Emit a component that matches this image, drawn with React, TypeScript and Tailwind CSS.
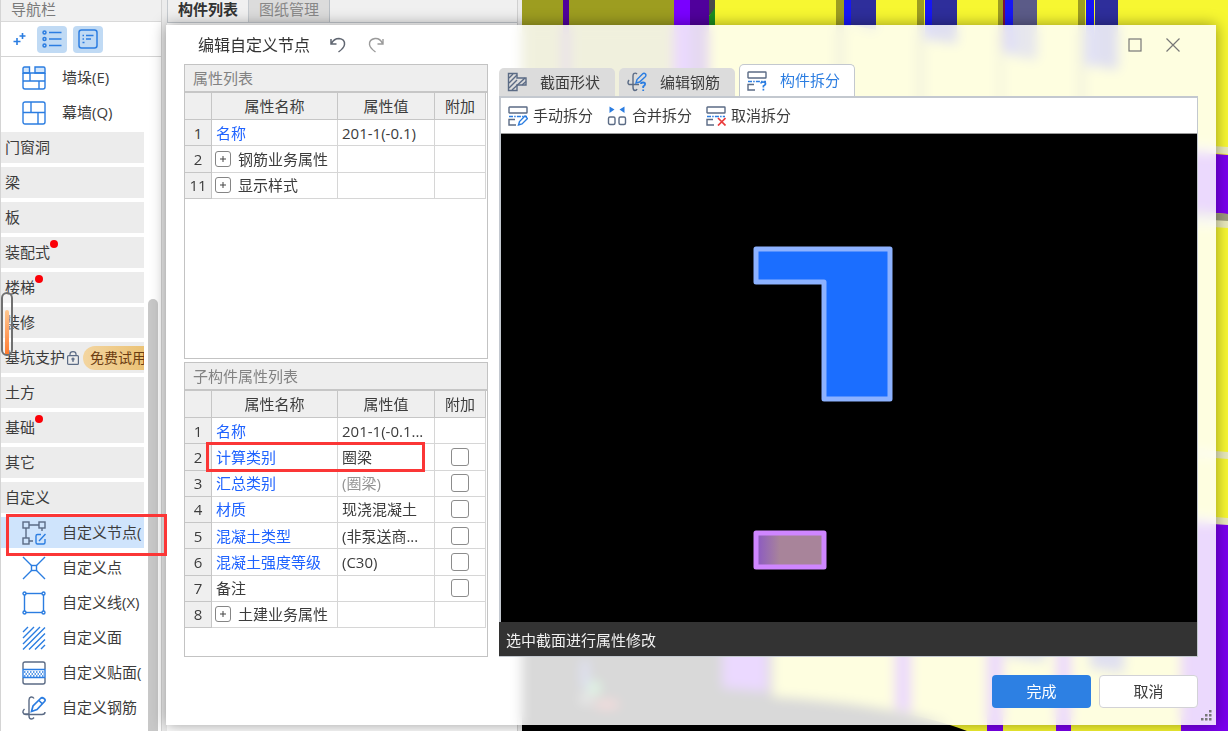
import React, { useState } from 'react';

type IconProps = { children: React.ReactNode; className?: string };

const BLUE = '#2b7de1';
const SLATE = '#5b6b85';

// 24 格图标
const Icon24: React.FC<IconProps> = ({ children, className = 'h-6 w-6 shrink-0' }) => (
  <svg viewBox="0 0 24 24" fill="none" stroke={BLUE} strokeWidth={1.4} className={className} aria-hidden="true">
    {children}
  </svg>
);

// 20 格图标
const Icon20: React.FC<IconProps> = ({ children }) => (
  <svg viewBox="0 0 20 20" fill="none" stroke={SLATE} strokeWidth={1.4} className="h-5 w-5 shrink-0" aria-hidden="true">
    {children}
  </svg>
);

const WallStackIcon = () => (
  <Icon24>
    <path d="M1 2.5Q1 1 2.5 1H7.5V7H1ZM13 7V1H21.5Q23 1 23 2.5V7Z" fill="#d3e6fb" />
    <path d="M1 7V21Q1 23 3 23H21Q23 23 23 21V7M1 7H23M1 15H17M12 7V15M7 15V23M17 15V23M17 15H23" stroke="none" />
    <path d="M1 7V21Q1 23 3 23H21Q23 23 23 21V7M1 7H23M1 15H23M8 7V15M17 15V23" />
  </Icon24>
);

const CurtainWallIcon = () => (
  <Icon24>
    <rect x="1" y="1" width="22" height="22" rx="2" />
    <path d="M1 11.5H23M9 1V11.5M16 11.5V23" />
  </Icon24>
);

const CustomNodeIcon = () => (
  <Icon24>
    <g stroke={SLATE}>
      <rect x="1" y="1" width="6" height="6" />
      <rect x="17" y="1" width="6" height="6" />
      <rect x="1" y="17" width="6" height="6" />
      <path d="M7 4H17M4 7V17M20 7V10M7 20H11" />
    </g>
    <path d="M19 13.5H15.5Q14 13.5 14 15V21.5Q14 23 15.5 23H21.5Q23 23 23 21.5V18M17 20L23.5 13" />
  </Icon24>
);

const CustomPointIcon = () => (
  <Icon24>
    <path d="M1 1L9.5 9.5M23 1L14.5 9.5M1 23L9.5 14.5M23 23L14.5 14.5" />
    <rect x="9.5" y="9.5" width="5" height="5" />
  </Icon24>
);

const CustomLineIcon = () => (
  <Icon24>
    <rect x="2.5" y="2.5" width="19" height="19" />
    <g fill="#fff">
      <circle cx="2.5" cy="2.5" r="1.5" />
      <circle cx="21.5" cy="2.5" r="1.5" />
      <circle cx="2.5" cy="21.5" r="1.5" />
      <circle cx="21.5" cy="21.5" r="1.5" />
    </g>
  </Icon24>
);

const CustomFaceIcon = () => (
  <Icon24>
    <path d="M1 6L6 1M1 12L12 1M1 18L18 1M1 23.5L23 1.5M7 23.5L23 7.5M13 23.5L23 13.5M19 23L23 19" />
  </Icon24>
);

const CustomVeneerIcon = () => (
  <Icon24>
    <path d="M1 8V3Q1 1 3 1H21Q23 1 23 3V8M1 17V21Q1 23 3 23H21Q23 23 23 21V17" stroke={SLATE} />
    <path d="M1 8.5H23M1 16.5H23M1 8V17M23 8V17" />
    <path d="M2 11H22" strokeDasharray="1.5 1.5" />
    <path d="M3.5 13H22" strokeDasharray="1.5 1.5" />
    <path d="M2 15H22" strokeDasharray="1.5 1.5" />
  </Icon24>
);

const CustomRebarIcon = () => (
  <Icon24>
    <path
      d="M12 2.5Q11 .8 9 1Q7 1.5 7 4V20Q7 23 9.5 23Q11 23 12 21.5M2.5 13Q.5 15 1 16.5Q1.5 18.5 4 18.5H20Q23 18.5 23 16M3 18H7"
      stroke={SLATE}
    />
    <path d="M9.500 15.500L11 10L18.500 2.500Q20 1 22 2.500Q24 4 22.500 5.500L15 13.500ZM17 4.500L20.500 8" strokeWidth={1.700} />
  </Icon24>
);

const SectionShapeIcon = () => (
  <Icon20>
    <path d="M1.5 1.5H10V6H19V13H10V18.5H1.5Z" />
    <path d="M2 6L6 2M2 11L10 3M2 16L10 8M5 18L18 6M11 12.5L17 7M15 13L19 9.5" />
  </Icon20>
);

const EditRebarIcon = () => (
  <Icon20>
    <path d="M10 2Q8.500 .5 7 1.500Q6 2 6 4V15Q6 18.500 8 18.500Q9.500 18.500 10 17M2 8Q0 11 2 12.500H12" />
    <path d="M9 11L10 7.500L15.500 2Q17 .500 18.500 2Q19.500 3.500 18 5L12.500 10Z" stroke={BLUE} />
    <path d="M14 12Q14 10.500 16 10.500Q18.500 10.500 18 12.500Q17.800 13.500 16.200 14.500V16M16.200 17.500V19" stroke={BLUE} strokeWidth={1.8} />
  </Icon20>
);

// 拆分类图标共用的底图
const SplitBase = () => (
  <>
    <rect x="1" y="1" width="18" height="6" rx="0.5" />
    <path d="M7 13.500H1V19H8" />
    <path d="M1 10.500H19" stroke={BLUE} strokeDasharray="4 1.200 1.500 1.200" />
  </>
);

const SplitQuestionIcon = () => (
  <Icon20>
    <SplitBase />
    <path d="M14 12.500Q14 11 16.200 11Q18.700 11 18.500 13Q18.300 14 16.400 15V16.500M16.400 17.800V19.400" stroke={BLUE} strokeWidth={1.7} />
  </Icon20>
);

const SplitManualIcon = () => (
  <Icon20>
    <SplitBase />
    <path d="M10.500 19L11.500 15.500L17 10L19.500 12.500L14 18Z" fill="#fff" stroke={BLUE} />
  </Icon20>
);

const SplitCancelIcon = () => (
  <Icon20>
    <SplitBase />
    <path d="M12 12L19.500 19.500M19.500 12L12 19.500" stroke="#ea3b3b" strokeWidth={1.7} />
  </Icon20>
);

const MergeIcon = () => (
  <Icon20>
    <rect x="1.500" y="11" width="6.500" height="7.500" rx="1.500" />
    <rect x="12" y="11" width="6.500" height="7.500" rx="1.500" />
    <path d="M2.500 0.500L7.500 3.500L2.500 7ZM17.500 0.500L12.500 3.500L17.500 7Z" fill={BLUE} stroke="none" />
  </Icon20>
);

const LockIcon = () => (
  <svg viewBox="0 0 12 14" fill="none" stroke={SLATE} strokeWidth={1.2} className="h-3.5 w-3 shrink-0" aria-hidden="true">
    <rect x="0.600" y="4.600" width="10.800" height="8.800" rx="1" />
    <path d="M3 4.500V3Q3 .6 6 .6Q9 .6 9 3V4.500M6 8.500V11" />
    <circle cx="6" cy="8" r="1" />
  </svg>
);

type NavItem = {
  label: string;
  icon?: React.FC;
  dot?: boolean;
  trial?: boolean;
  active?: boolean;
};

const navItems: NavItem[] = [
  { label: '墙垛(E)', icon: WallStackIcon },
  { label: '幕墙(Q)', icon: CurtainWallIcon },
  { label: '门窗洞' },
  { label: '梁' },
  { label: '板' },
  { label: '装配式', dot: true },
  { label: '楼梯', dot: true },
  { label: '装修' },
  { label: '基坑支护', trial: true },
  { label: '土方' },
  { label: '基础', dot: true },
  { label: '其它' },
  { label: '自定义' },
  { label: '自定义节点(', icon: CustomNodeIcon, active: true },
  { label: '自定义点', icon: CustomPointIcon },
  { label: '自定义线(X)', icon: CustomLineIcon },
  { label: '自定义面', icon: CustomFaceIcon },
  { label: '自定义贴面(', icon: CustomVeneerIcon },
  { label: '自定义钢筋', icon: CustomRebarIcon },
];

type PropRow = {
  no: number;
  name: string;
  value?: string;
  link?: boolean;
  muted?: boolean;
  group?: boolean;
  check?: boolean;
  marked?: boolean;
};

const nodeProps: PropRow[] = [
  { no: 1, name: '名称', value: '201-1(-0.1)', link: true },
  { no: 2, name: '钢筋业务属性', group: true },
  { no: 11, name: '显示样式', group: true },
];

const childProps: PropRow[] = [
  { no: 1, name: '名称', value: '201-1(-0.1...', link: true },
  { no: 2, name: '计算类别', value: '圈梁', link: true, check: true, marked: true },
  { no: 3, name: '汇总类别', value: '(圈梁)', link: true, muted: true, check: true },
  { no: 4, name: '材质', value: '现浇混凝土', link: true, check: true },
  { no: 5, name: '混凝土类型', value: '(非泵送商...', link: true, check: true },
  { no: 6, name: '混凝土强度等级', value: '(C30)', link: true, check: true },
  { no: 7, name: '备注', check: true },
  { no: 8, name: '土建业务属性', group: true },
];

const Sidebar = () => (
  <aside className="relative flex w-[162px] shrink-0 flex-col border-x border-[#d4d4d4] bg-white">
    <div className="h-[22px] shrink-0 border-b border-[#d9d9d9] bg-[#f0f0f0] pl-[10px] leading-[18px] text-[#7a7a7a]">导航栏</div>
    <div className="flex h-[35px] shrink-0 items-center gap-[6px] border-b border-[#d4d4d4] pl-[8px]">
      <button aria-label="添加" className="flex h-[27px] w-[22px] items-center justify-center">
        <svg viewBox="0 0 14 14" stroke={BLUE} strokeWidth={1.6} className="h-3.5 w-3.5" aria-hidden="true">
          <path d="M4 6V13M.5 9.500H7.500M9.500 1V7M6.500 4H12.500" />
        </svg>
      </button>
      <button aria-label="列表" className="flex h-[27px] w-[30px] items-center justify-center rounded bg-[#c0daf4]">
        <svg viewBox="0 0 20 18" fill="none" stroke={BLUE} strokeWidth={1.5} className="h-[18px] w-5" aria-hidden="true">
          <circle cx="2.500" cy="2.500" r="1.500" />
          <circle cx="2.500" cy="9" r="1.500" />
          <circle cx="2.500" cy="15.500" r="1.500" />
          <path d="M7 2.500H19.500M7 9H19.500M7 15.500H19.500" />
        </svg>
      </button>
      <button aria-label="详情" className="flex h-[27px] w-[30px] items-center justify-center rounded bg-[#c0daf4]">
        <svg viewBox="0 0 20 20" fill="none" stroke={BLUE} strokeWidth={1.5} className="h-5 w-5" aria-hidden="true">
          <rect x="1" y="1" width="18" height="18" rx="2.500" />
          <path d="M4.500 6.500H6M8 6.500H15.500M4.500 10H6M8 10H13M4.500 13.500H6.500" />
        </svg>
      </button>
    </div>

    <nav className="flex flex-col gap-1 pr-[17px] pt-[5px]">
      {navItems.map(({ label, icon: ItemIcon, dot, trial, active }) => (
        <div key={label} className="relative">
          <button
            className={`flex h-[31px] w-full items-center overflow-hidden whitespace-nowrap ${
              active ? 'bg-[#cfe4fc]' : ItemIcon ? 'bg-white' : 'bg-[#ececec]'
            } ${ItemIcon ? 'gap-4 pl-[21px]' : 'pl-1'}`}
          >
            {ItemIcon && <ItemIcon />}
            <span className="relative">
              {label}
              {dot && <span className="absolute -right-2 -top-[1px] h-2 w-2 rounded-full bg-[#fb0007]" />}
            </span>
            {trial && (
              <>
                <span className="ml-[2px]">
                  <LockIcon />
                </span>
                <span className="ml-1 h-6 shrink-0 rounded-l-full bg-gradient-to-r from-[#f3d5a0] to-[#ebc274] pl-[7px] text-[14px] leading-6 text-[#6b3c12]">
                  免费试用
                </span>
              </>
            )}
          </button>
          {active && <span className="pointer-events-none absolute -bottom-2 -right-[23px] -top-[3px] left-[5px] z-20 border-3 border-[#fb3636]" />}
        </div>
      ))}
    </nav>

    {/* 滚动条 */}
    <div className="absolute bottom-0 right-[3px] top-[299px] w-[10px] rounded-t-full bg-[#c8c8c8]" />
    {/* 侧边把手 */}
    <div className="absolute left-0 top-[292px] flex h-[64px] w-[12px] items-end rounded-[6px] border-2 border-[#707070] bg-white/40 pl-[2px]">
      <div className="h-[44px] w-1 rounded-t bg-gradient-to-b from-[#ffc78f] to-[#ff7a2c]" />
    </div>
  </aside>
);

const ComponentPanel = () => (
  <section className="flex w-[351px] shrink-0 flex-col border-r border-[#d0d0d0] bg-white">
    <div className="flex h-[23px] border-b border-[#c4c9ce] bg-[#f0f0f0] leading-[18px]">
      <button className="border-x border-[#c4c9ce] px-[10px] pb-1 font-bold text-[#333]">构件列表</button>
      <button className="border-r border-[#b9bfc5] bg-[#dcdcdc] px-[10px] pb-1 text-[#888]">图纸管理</button>
    </div>
    <div className="flex-1" />
  </section>
);

// 主窗口三维视图
const ModelView = () => (
  <svg viewBox="522 0 706 731" preserveAspectRatio="xMinYMin slice" className="h-full min-w-0 flex-1 bg-black" aria-hidden="true">
    <path d="M522 0H1228V731H522Z" fill="#f7f731" />
    <path d="M522 0H674V500H522Z" fill="#9d9d20" />
    <path d="M563 0H569V500H563Z" fill="#50009c" />
    <path d="M674 0H690V500H674Z" fill="#7a00ff" />
    <path d="M690 0H709V500H690Z" fill="#50009c" />
    <path d="M709 0H715V10L709 16Z" fill="#4a4a4a" />
    <path d="M709 16L715 8V25H709Z" fill="#1b8c20" />
    <path d="M836 0H844V110H836ZM917 0H924V110H917ZM998 0H1003V110H998ZM1078 0H1085V110H1078Z" fill="#9d9d20" />
    <path d="M844 0H851V26H844ZM925 0H932V40H925ZM1005 0H1013V54H1005ZM1086 0H1094V66H1086Z" fill="#1717f5" />
    <path d="M851 0H876V30L851 25ZM932 0H957V44L932 40ZM1095 0H1118V70L1095 66Z" fill="#2e2e9b" />
    <path d="M1013 0H1037V60L1013 56Z" fill="#5b5b88" />
    <path d="M1003 0H1005V50H1003Z" fill="#7a1040" />
    <path d="M1150 142L1228 147V154L1150 149ZM1150 216L1228 220V228L1150 223ZM1150 446L1228 452V459L1150 453ZM1150 512L1228 518V526L1150 520Z" fill="#e9e9bb" />
    <path d="M1150 149L1228 155V214L1150 208Z" fill="#7a00ee" />
    <path d="M1150 208L1228 214V221L1150 216Z" fill="#9c9c7c" />
    <path d="M1150 520L1228 525V731H1181V600H1150Z" fill="#7a00ee" />
    <path d="M522 500H772V697Q900 705 967 731H522Z" fill="#000" />
    <path d="M722 500H768V692L722 688Z" fill="#7a00ff" />
    <path d="M895 600H911V713L895 709ZM987 600H1003V731H987ZM1056 600H1071V731H1056Z" fill="#7a00ee" />
    <path d="M1005 640H1045V662L1005 656ZM1090 640H1124V673L1090 668Z" fill="#2e2e9b" />
    <path d="M582 660H588V688H582Z" fill="#3a50f0" />
    <path d="M589 682H600V694H589Z" fill="#30e050" />
    <path d="M596 701H618V708H596Z" fill="#f02020" />
    <path d="M580 694H592V704H580Z" fill="#777" />
  </svg>
);

const PropertyTable: React.FC<{ title: string; rows: PropRow[]; tableClass: string }> = ({ title, rows, tableClass }) => (
  <section className="flex-1 border border-[#c3c3c3] bg-white">
    <h2 className="h-[28px] border-b-2 border-[#c6c6c6] bg-[#eee] pl-2 leading-[26px] text-[#828282]">{title}</h2>
    <table className={`w-[301px] table-fixed border-separate border-spacing-0 ${tableClass}`}>
      <colgroup>
        <col className="w-[27px]" />
        <col className="w-[126px]" />
        <col className="w-[97px]" />
        <col className="w-[51px]" />
      </colgroup>
      <thead>
        <tr className="bg-[#efefef]">
          {['', '属性名称', '属性值', '附加'].map(head => (
            <th key={head} className="h-[27px] border-b border-r border-[#c6c6c6] p-0 font-normal leading-5">
              {head}
            </th>
          ))}
        </tr>
      </thead>
      <tbody>
        {rows.map(row => (
          <tr key={row.no}>
            <td className="h-[26px] border-b border-r border-[#c6c6c6] bg-[#efefef] p-0 text-center leading-5">{row.no}</td>
            <td className={`relative border-b border-r border-[#d6d6d6] p-0 leading-5 ${row.link ? 'pl-1 text-[#1f63ff]' : row.group ? 'pl-[3px]' : 'pl-1'}`}>
              {row.group ? (
                <span className="flex items-center gap-[7px]">
                  <button aria-label={`展开${row.name}`} className="flex h-4 w-4 items-center justify-center rounded-[3px] border border-[#858585]">
                    <svg viewBox="0 0 8 8" stroke="#444" className="h-2 w-2" aria-hidden="true">
                      <path d="M1 4H7M4 1V7" />
                    </svg>
                  </button>
                  {row.name}
                </span>
              ) : (
                row.name
              )}
              {row.marked && <span className="pointer-events-none absolute -left-[6px] -top-[2px] z-10 h-[30px] w-[219px] border-3 border-[#fb3636]" />}
            </td>
            <td className={`overflow-hidden whitespace-nowrap border-b border-r border-[#d6d6d6] p-0 pl-1 leading-5 ${row.muted ? 'text-[#949494]' : ''}`}>
              {row.value}
            </td>
            <td className="border-b border-r border-[#d6d6d6] p-0">
              {row.check && (
                <input
                  type="checkbox"
                  aria-label={`附加${row.name}`}
                  className="mx-auto block h-[18px] w-[18px] appearance-none rounded-[3px] border border-[#8c8c8c] bg-white checked:bg-[#2b7de1]"
                />
              )}
            </td>
          </tr>
        ))}
      </tbody>
    </table>
  </section>
);

const tabs = [
  { label: '截面形状', icon: SectionShapeIcon },
  { label: '编辑钢筋', icon: EditRebarIcon },
  { label: '构件拆分', icon: SplitQuestionIcon },
];

const tools = [
  { label: '手动拆分', icon: SplitManualIcon },
  { label: '合并拆分', icon: MergeIcon },
  { label: '取消拆分', icon: SplitCancelIcon },
];

const SectionEditor = () => {
  const [activeTab, setActiveTab] = useState('构件拆分');

  return (
    <div className="flex min-w-0 flex-1 flex-col">
      <div className="flex h-8 items-end gap-1" role="tablist">
        {tabs.map(({ label, icon: TabIcon }) => (
          <button
            key={label}
            role="tab"
            aria-selected={activeTab === label}
            onClick={() => setActiveTab(label)}
            className={`flex items-center gap-[13px] rounded-t-[5px] pl-[7px] pr-[14px] ${
              activeTab === label ? 'h-8 border border-b-0 border-[#c3c8cf] bg-white text-[#2b7de1]' : 'h-7 border-x border-transparent bg-[#dcdcdc]'
            }`}
          >
            <TabIcon />
            {label}
          </button>
        ))}
      </div>
      <div className="flex flex-1 flex-col border-2 border-b border-r border-[#c3c8cf] bg-white">
        <div className="flex h-9 items-center gap-[14px] border-b border-[#999] pl-[7px]">
          {tools.map(({ label, icon: ToolIcon }) => (
            <button key={label} className="flex items-center gap-[5px]">
              <ToolIcon />
              {label}
            </button>
          ))}
        </div>
        <div className="min-h-0 flex-1 bg-black">
          <svg viewBox="0 0 696 488" className="block h-full w-full" role="img" aria-label="截面">
            <defs>
              <linearGradient id="beam">
                <stop offset="0" stopColor="#8b58c4" />
                <stop offset="0.35" stopColor="#a8849a" />
                <stop offset="1" stopColor="#a8849a" />
              </linearGradient>
            </defs>
            <path d="M255 115H389V265H323V148H255Z" fill="#1b6eff" stroke="#8db2ff" strokeWidth={5} strokeLinejoin="round" />
            <rect x="255" y="399" width="68" height="34" fill="url(#beam)" stroke="#cf86ff" strokeWidth={5} strokeLinejoin="round" />
          </svg>
        </div>
        <p className="-ml-[2px] h-[34px] bg-[#333] pl-[7px] leading-9 text-[#f0f0f0]">选中截面进行属性修改</p>
      </div>
    </div>
  );
};

const EditNodeDialog = () => (
  <div
    role="dialog"
    aria-label="编辑自定义节点"
    className="absolute bottom-[6px] left-[166px] right-3 top-[25px] z-10 flex flex-col bg-white/85 px-[18px] shadow-[0_0_14px_rgba(0,0,0,0.4)] backdrop-blur-[6px]"
  >
    <header className="flex h-[39px] shrink-0 items-center pl-[14px] pr-[18px] text-[#555]">
      <h1 className="mr-5 text-[16px] text-[#333]">编辑自定义节点</h1>
      <button aria-label="撤销" className="mr-[22px]">
        <svg viewBox="0 0 16 16" fill="none" stroke="#5f6570" strokeWidth={1.5} className="h-4 w-4" aria-hidden="true">
          <path d="M1 2V7H6.500M1.500 6.500Q4 1.500 9 1.500Q15 2 14.500 7.500Q14 11 8.500 15" />
        </svg>
      </button>
      <button aria-label="重做">
        <svg viewBox="0 0 16 16" fill="none" stroke="#9a9a9a" strokeWidth={1.4} className="h-4 w-4" aria-hidden="true">
          <path d="M15 2V7H9.500M14.500 6.500Q12 1 7 1.500Q1 2.500 1.500 7.500Q2 11 7.500 15" />
        </svg>
      </button>
      <button aria-label="最大化" className="ml-auto mr-6">
        <svg viewBox="0 0 14 14" fill="none" stroke="#777" strokeWidth={1.2} className="h-3.5 w-3.5" aria-hidden="true">
          <rect x="1" y="1" width="12" height="12" />
        </svg>
      </button>
      <button aria-label="关闭">
        <svg viewBox="0 0 14 14" stroke="#777" strokeWidth={1.2} className="h-3.5 w-3.5" aria-hidden="true">
          <path d="M.5 .5L13.500 13.500M13.500 .5L.5 13.500" />
        </svg>
      </button>
    </header>

    <div className="flex min-h-0 flex-1 gap-[11px]">
      <div className="flex w-[304px] shrink-0 flex-col gap-[3px]">
        <PropertyTable title="属性列表" rows={nodeProps} tableClass="h-[106px]" />
        <PropertyTable title="子构件属性列表" rows={childProps} tableClass="h-[237px]" />
      </div>
      <SectionEditor />
    </div>

    <footer className="flex shrink-0 justify-end gap-2 pb-[17px] pt-[18px]">
      <button className="h-[33px] w-[99px] rounded bg-[#2d80e3] text-white">完成</button>
      <button className="h-[33px] w-[99px] rounded border border-[#d2d2d6] bg-white">取消</button>
    </footer>

    <svg viewBox="0 0 11 11" fill="#777" className="absolute bottom-1 right-1 h-[11px] w-[11px]" aria-hidden="true">
      <path d="M8 0H10.500V2.500H8ZM4 4H6.500V6.500H4ZM8 4H10.500V6.500H8ZM0 8H2.500V10.500H0ZM4 8H6.500V10.500H4ZM8 8H10.500V10.500H8Z" />
    </svg>
  </div>
);

export default function App() {
  return (
    <div className="relative flex h-screen min-h-[720px] overflow-hidden bg-[#ececec] font-['Open_Sans','Noto_Sans_CJK_SC',sans-serif] text-[15px] text-[#3c3c3c]">
      <Sidebar />
      <div className="flex min-w-0 flex-1 gap-1 pl-[5px]">
        <ComponentPanel />
        <ModelView />
      </div>
      <EditNodeDialog />
    </div>
  );
}
